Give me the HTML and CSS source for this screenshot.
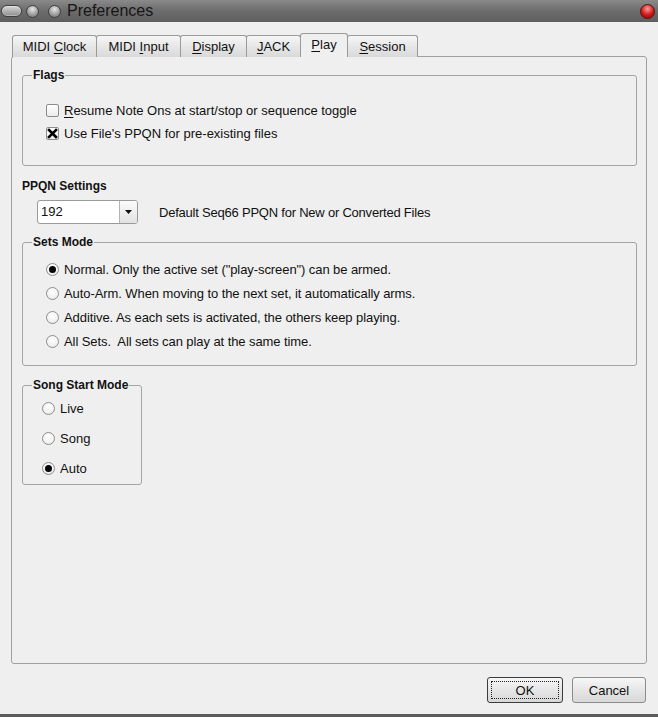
FILE: index.html
```html
<!DOCTYPE html>
<html>
<head>
<meta charset="utf-8">
<title>Preferences</title>
<link rel="stylesheet" href="styles.css">
</head>
<body>
<div class="window">
  <div class="titlebar">
    <span class="tb-pill"></span>
    <span class="tb-dot"></span>
    <span class="tb-dot tb-dot2"></span>
    <span class="title">Preferences</span>
    <span class="tb-close"></span>
  </div>
  <div class="content">
    <div class="tabs">
      <div class="tab w-clock">MIDI <u>C</u>lock</div>
      <div class="tab w-input">MIDI <u>I</u>nput</div>
      <div class="tab w-display"><u>D</u>isplay</div>
      <div class="tab w-jack"><u>J</u>ACK</div>
      <div class="tab tab-active w-play"><u>P</u>lay</div>
      <div class="tab w-session"><u>S</u>ession</div>
    </div>
    <div class="pane">
      <div class="group group-flags">
        <div class="group-title">Flags</div>
        <div class="rows rows-flags">
          <div class="row row-23"><span class="check"></span><span><u>R</u>esume Note Ons at start/stop or sequence toggle</span></div>
          <div class="row row-23"><span class="check"><svg width="11" height="11" viewBox="0 0 11 11"><path d="M2 2 L9 9 M9 2 L2 9" stroke="#000" stroke-width="2.6" stroke-linecap="square"/></svg></span><span>Use File's PPQN for pre-existing files</span></div>
        </div>
      </div>

      <div class="section-title">PPQN Settings</div>
      <div class="ppqn-row">
        <div class="combo">
          <span class="combo-text">192</span>
          <span class="combo-btn"><svg width="7" height="4" viewBox="0 0 7 4"><path d="M0 0 H7 L3.5 4 Z" fill="#111"/></svg></span>
        </div>
        <span class="ppqn-label">Default Seq66 PPQN for New or Converted Files</span>
      </div>

      <div class="group group-sets">
        <div class="group-title">Sets Mode</div>
        <div class="rows rows-sets">
          <div class="row row-24"><span class="radio radio-on"></span><span>Normal. Only the active set ("play-screen") can be armed.</span></div>
          <div class="row row-24"><span class="radio"></span><span>Auto-Arm. When moving to the next set, it automatically arms.</span></div>
          <div class="row row-24"><span class="radio"></span><span>Additive. As each sets is activated, the others keep playing.</span></div>
          <div class="row row-24"><span class="radio"></span><span>All Sets.&nbsp; All sets can play at the same time.</span></div>
        </div>
      </div>

      <div class="group group-song">
        <div class="group-title">Song Start Mode</div>
        <div class="rows rows-song">
          <div class="row row-30"><span class="radio"></span><span>Live</span></div>
          <div class="row row-30"><span class="radio"></span><span>Song</span></div>
          <div class="row row-30"><span class="radio radio-on"></span><span>Auto</span></div>
        </div>
      </div>
    </div>
    <div class="buttons">
      <div class="btn btn-default"><span class="focus">OK</span></div>
      <div class="btn btn-cancel">Cancel</div>
    </div>
  </div>
</div>
</body>
</html>
```
FILE: styles.css
```css
* { box-sizing: border-box; }
html, body {
  margin: 0;
  padding: 0;
  background: #5c5c5c;
  width: 658px;
  height: 717px;
  overflow: hidden;
}
body {
  font-family: "Liberation Sans", Arial, sans-serif;
  font-size: 13px;
  color: #111;
}
u { text-decoration: underline; text-underline-offset: 2px; }

.window {
  width: 658px;
  height: 714px;
  background: #efefef;
  display: flex;
  flex-direction: column;
}

/* Title bar */
.titlebar {
  height: 22px;
  flex: none;
  display: flex;
  align-items: center;
  background: linear-gradient(#8a8a8a, #6e6e6e 45%, #5e5e5e);
  padding-left: 1px;
  padding-right: 3px;
}
.tb-pill {
  width: 21px;
  height: 12px;
  border-radius: 6px;
  border: 1px solid #3e3e3e;
  background: linear-gradient(#d8d8d8, #8c8c8c);
  box-shadow: inset 0 0 0 1px rgba(255,255,255,0.35);
}
.tb-dot {
  width: 13px;
  height: 13px;
  border-radius: 50%;
  border: 1px solid #3e3e3e;
  background: radial-gradient(circle at 50% 30%, #e6e6e6, #9a9a9a 60%, #6f6f6f);
  margin-left: 4px;
}
.tb-dot2 { margin-left: 9px; }
.title {
  margin-left: 6px;
  font-size: 16px;
  color: #161616;
  flex: 1;
  line-height: 22px;
}
.tb-close {
  width: 15px;
  height: 15px;
  border-radius: 50%;
  border: 1px solid #5a1010;
  background: radial-gradient(circle at 50% 30%, #ff9a9a, #d01818 55%, #8a0606);
}

/* Content */
.content {
  flex: 1;
  display: flex;
  flex-direction: column;
  padding: 0 11px;
}
.tabs {
  display: flex;
  align-items: flex-end;
  padding-top: 11px;
  padding-left: 1px;
  margin-bottom: -1px;
  position: relative;
  z-index: 1;
}
.tab {
  height: 22px;
  line-height: 21px;
  text-align: center;
  border: 1px solid #9a9a9a;
  border-bottom: none;
  border-radius: 3px 3px 0 0;
  background: linear-gradient(#f6f6f6, #e4e4e4 60%, #d9d9d9);
  margin-right: -1px;
  color: #111;
  white-space: nowrap;
}
.tab-active {
  height: 24px;
  padding-bottom: 2px;
  background: #efefef;
  position: relative;
  z-index: 2;
}
.w-clock { width: 85px; }
.w-input { width: 85px; }
.w-display { width: 67px; }
.w-jack { width: 55px; }
.w-play { width: 48px; }
.w-session { width: 71px; }

.pane {
  height: 608px;
  flex: none;
  border: 1px solid #a0a0a0;
  border-radius: 3px;
  padding: 0 9px 0 10px;
  display: flex;
  flex-direction: column;
  align-items: flex-start;
}

.group {
  border: 1px solid #a4a4a4;
  border-radius: 3px;
  width: 100%;
}
.group-title {
  font-weight: bold;
  font-size: 12px;
  line-height: 16px;
  margin: -9px 0 0 9px;
  padding: 0 1px;
  background: #efefef;
  width: fit-content;
}
.rows { display: flex; flex-direction: column; }
.row {
  display: flex;
  align-items: center;
  gap: 5px;
  white-space: nowrap;
}
.row-23 { height: 23px; }
.row-24 { height: 24px; }
.row-30 { height: 30px; }

.group-flags { margin-top: 18px; padding-bottom: 20px; }
.rows-flags { margin-top: 16px; padding-left: 23px; }

.group-sets { margin-top: 18px; padding-bottom: 12px; }
.rows-sets { margin-top: 7px; padding-left: 23px; }
.rows-sets .row { letter-spacing: -0.08px; }

.group-song { margin-top: 19px; width: 120px; padding-bottom: 1px; }
.rows-song { padding-left: 19px; gap: 0; }

.check {
  width: 13px;
  height: 13px;
  flex: none;
  border: 1px solid #8c8c8c;
  border-radius: 2px;
  background: linear-gradient(#ffffff, #ececec);
  display: flex;
  align-items: center;
  justify-content: center;
}
.radio {
  width: 13px;
  height: 13px;
  flex: none;
  border: 1px solid #8e8e8e;
  border-radius: 50%;
  background: radial-gradient(circle at 50% 35%, #ffffff, #f2f2f2 60%, #dcdcdc);
  display: flex;
  align-items: center;
  justify-content: center;
}
.radio-on::after {
  content: "";
  width: 7px;
  height: 7px;
  border-radius: 50%;
  background: #050505;
}

.section-title {
  font-weight: bold;
  font-size: 12px;
  line-height: 16px;
  margin-top: 12px;
}
.ppqn-row {
  margin-top: 6px;
  padding-left: 15px;
  display: flex;
  align-items: center;
  gap: 21px;
}
.combo {
  width: 101px;
  height: 24px;
  border: 1px solid #9a9a9a;
  border-radius: 3px;
  background: #fff;
  display: flex;
}
.combo-text {
  flex: 1;
  line-height: 22px;
  padding-left: 3px;
}
.combo-btn {
  width: 18px;
  border-left: 1px solid #b4b4b4;
  border-radius: 0 2px 2px 0;
  background: linear-gradient(#fbfbfb, #e2e2e2);
  display: flex;
  align-items: center;
  justify-content: center;
}
.ppqn-label { white-space: nowrap; letter-spacing: -0.22px; }

.buttons {
  margin-top: 13px;
  margin-right: 1px;
  display: flex;
  justify-content: flex-end;
  gap: 9px;
}
.btn {
  height: 26px;
  border: 1px solid #8c8c8c;
  border-radius: 3px;
  background: linear-gradient(#f7f7f7, #e6e6e6 50%, #d8d8d8);
  display: flex;
  align-items: center;
  justify-content: center;
  color: #111;
}
.btn-default {
  width: 76px;
  border-color: #3c3c3c;
  padding: 3px;
}
.focus {
  width: 100%;
  height: 100%;
  border: 1px dotted #222;
  display: flex;
  align-items: center;
  justify-content: center;
}
.btn-cancel { width: 74px; }
```
